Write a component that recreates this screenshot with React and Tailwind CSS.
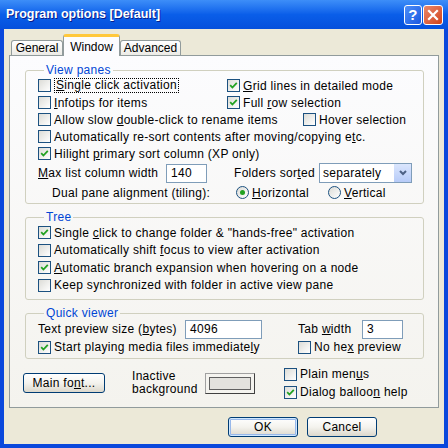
import React from "react";

const Check = ({ checked }) => (
  <span className="w-[13px] h-[13px] shrink-0 border border-[#1c5180] bg-gradient-to-br from-[#dcdcd7] to-white flex items-center justify-center">
    {checked && (
      <svg width="9" height="9" viewBox="0 0 9 9">
        <path d="M1.2 4.2 L3.4 6.5 L7.8 1.8" stroke="#21a121" strokeWidth="1.8" fill="none" />
      </svg>
    )}
  </span>
);

const Radio = ({ checked }) => (
  <span className="w-[13px] h-[13px] shrink-0 rounded-full border border-[#1c5180] bg-gradient-to-br from-[#dcdcd7] to-white flex items-center justify-center">
    {checked && <span className="w-[5px] h-[5px] rounded-full bg-[#21a121]" />}
  </span>
);

const CheckRow = ({ checked, children, className = "" }) => (
  <div className={`flex items-center gap-[3px] ${className}`}>
    <Check checked={checked} />
    <span className="whitespace-nowrap">{children}</span>
  </div>
);

const Field = ({ value, className = "" }) => (
  <div className={`h-[19px] border border-[#7f9db9] bg-white flex items-center px-[4px] ${className}`}>{value}</div>
);

const Group = ({ title, children, className = "" }) => (
  <fieldset className={`border border-[#d0d0bf] rounded-[3px] pl-[12px] ${className}`}>
    <legend className="ml-[6px] px-[2px] leading-[14px] text-[#0046d5]">{title}</legend>
    {children}
  </fieldset>
);

const XpButton = ({ children, primary, className = "" }) => (
  <div
    className={`h-[20px] rounded-[3px] border border-[#003c74] bg-gradient-to-b from-white via-[#f4f3ee] to-[#dcd8cc] flex items-center justify-center ${
      primary ? "shadow-[inset_0_0_0_1px_#cee7ff,inset_0_0_0_2px_#98b8ea]" : ""
    } ${className}`}
  >
    {children}
  </div>
);

export default function App() {
  return (
    <div className="w-[448px] h-[448px] bg-[#0a48dc] flex flex-col text-[12px] tracking-[0.3px] text-black font-['Liberation_Sans',Arial,sans-serif] overflow-hidden">
      {/* Title bar */}
      <div className="h-[29px] shrink-0 bg-gradient-to-b from-[#3d8ef8] via-[#0a5ee9] to-[#0550dc] flex items-center pl-[6px] pr-[5px]">
        <div className="text-white font-bold text-[12.5px] tracking-normal [text-shadow:1px_1px_#0a1e8c] flex-1">Program options [Default]</div>
        <div className="w-[18px] h-[20px] rounded-[3px] border border-white bg-gradient-to-br from-[#4e8ff8] to-[#1a55e0] flex items-center justify-center text-white font-bold text-[15px] leading-none">?</div>
        <div className="w-[20px] h-[20px] ml-[1px] rounded-[3px] border border-white bg-gradient-to-br from-[#e8876a] to-[#d2400f] flex items-center justify-center">
          <svg width="12" height="12" viewBox="0 0 12 12">
            <path d="M2 2 L10 10 M10 2 L2 10" stroke="white" strokeWidth="2.2" strokeLinecap="square" />
          </svg>
        </div>
      </div>

      {/* Body */}
      <div className="flex-1 mx-[4px] mb-[4px] bg-[#ece9d8] flex flex-col pt-[5px] px-[5px]">
        {/* Tabs */}
        <div className="flex items-end h-[21px] pl-[2px] relative z-10 tracking-normal">
          <div className="w-[52px] h-[15px] border border-b-0 border-[#919b9c] rounded-t-[3px] bg-gradient-to-b from-white to-[#ecebe6] flex items-center justify-center">General</div>
          <div className="w-[57px] h-[22px] -mb-[1px] border-x border-[#919b9c] border-t-[3px] border-t-[#ffc83c] rounded-t-[3px] bg-[#fcfcfe] flex items-center justify-center">Window</div>
          <div className="w-[61px] h-[15px] border border-b-0 border-[#919b9c] rounded-t-[3px] bg-gradient-to-b from-white to-[#ecebe6] flex items-center justify-center">Advanced</div>
        </div>

        {/* Panel */}
        <div className="h-[353px] border border-[#919b9c] bg-gradient-to-b from-[#fcfcfe] to-[#f4f3ee] pt-[7px] pl-[15px] pr-[14px]">
          <Group title="View panes" className="pb-[2px]">
            <div className="flex h-[17px] items-center">
              <div className="w-[189px] flex items-center gap-[3px]">
                <Check />
                <span className="border border-dotted border-black px-[1px] leading-[13px]"><u>S</u>ingle click activation</span>
              </div>
              <CheckRow checked><u>G</u>rid lines in detailed mode</CheckRow>
            </div>
            <div className="flex h-[17px] items-center">
              <CheckRow className="w-[189px]"><u>I</u>nfotips for items</CheckRow>
              <CheckRow checked>Full <u>r</u>ow selection</CheckRow>
            </div>
            <div className="flex h-[17px] items-center">
              <CheckRow className="w-[265px]">Allow slow <u>d</u>ouble-click to rename items</CheckRow>
              <CheckRow>Hover selection</CheckRow>
            </div>
            <CheckRow className="h-[17px]">Automatically re-sort contents after moving/copying e<u>t</u>c.</CheckRow>
            <CheckRow className="h-[17px]" checked>Hilight <u>p</u>rimary sort column (XP only)</CheckRow>
            <div className="flex h-[22px] items-center">
              <span className="w-[128px]"><u>M</u>ax list column width</span>
              <Field value="140" className="w-[41px]" />
              <span className="ml-[27px] w-[85px]">Folders sor<u>t</u>ed</span>
              <div className="w-[93px] h-[20px] border border-[#7f9db9] bg-white flex items-center">
                <span className="flex-1 pl-[3px]">separately</span>
                <span className="w-[17px] h-[18px] bg-gradient-to-b from-[#dbe6fd] to-[#b7cbf8] flex items-center justify-center">
                  <svg width="8" height="6" viewBox="0 0 8 6">
                    <path d="M1 1 L4 4 L7 1" stroke="#4d6185" strokeWidth="2" fill="none" />
                  </svg>
                </span>
              </div>
            </div>
            <div className="flex h-[17px] items-center">
              <span className="w-[198px] pl-[14px]">Dual pane alignment (tiling):</span>
              <div className="w-[92px] flex items-center gap-[3px]">
                <Radio checked />
                <span><u>H</u>orizontal</span>
              </div>
              <div className="flex items-center gap-[3px]">
                <Radio />
                <span><u>V</u>ertical</span>
              </div>
            </div>
          </Group>

          <Group title="Tree" className="mt-[6px] pb-[5px]">
            <CheckRow className="h-[17px]" checked>Single <u>c</u>lick to change folder &amp; "hands-free" activation</CheckRow>
            <CheckRow className="h-[18px]">Automatically shift <u>f</u>ocus to view after activation</CheckRow>
            <CheckRow className="h-[17px]" checked><u>A</u>utomatic branch expansion when hovering on a node</CheckRow>
            <CheckRow className="h-[18px]">Keep synchronized with folder in active view pane</CheckRow>
          </Group>

          <Group title="Quick viewer" className="mt-[6px] pb-[2px]">
            <div className="flex h-[18px] items-center">
              <span className="w-[147px]">Text preview size (<u>b</u>ytes)</span>
              <Field value="4096" className="w-[77px]" />
              <span className="ml-[36px] w-[64px]">Tab <u>w</u>idth</span>
              <Field value="3" className="w-[41px]" />
            </div>
            <div className="flex h-[18px] items-center">
              <CheckRow className="w-[260px]" checked>Start playing media files immediate<u>l</u>y</CheckRow>
              <CheckRow>No he<u>x</u> preview</CheckRow>
            </div>
          </Group>

          <div className="flex items-center mt-[6px]">
            <XpButton className="w-[82px] -ml-[2px]">Main fo<u>n</u>t...</XpButton>
            <div className="ml-[27px] leading-[13px] w-[73px]">
              <div>Inactive</div>
              <div>background</div>
            </div>
            <div className="w-[50px] h-[21px] mt-[1px] border border-t-[#a0a0a0] border-l-[#a0a0a0] border-b-[#404040] border-r-[#404040] p-[3px]">
              <div className="w-full h-full border border-[#606060] bg-[#e3e2de]" />
            </div>
            <div className="ml-[29px] flex flex-col">
              <CheckRow className="h-[18px]">Plain men<u>u</u>s</CheckRow>
              <CheckRow className="h-[18px]" checked>Dialog balloo<u>n</u> help</CheckRow>
            </div>
          </div>
        </div>

        {/* Buttons */}
        <div className="flex justify-end gap-[9px] mt-[9px] pr-[62px]">
          <XpButton primary className="w-[70px]">OK</XpButton>
          <XpButton className="w-[70px]">Cancel</XpButton>
        </div>
      </div>
    </div>
  );
}
